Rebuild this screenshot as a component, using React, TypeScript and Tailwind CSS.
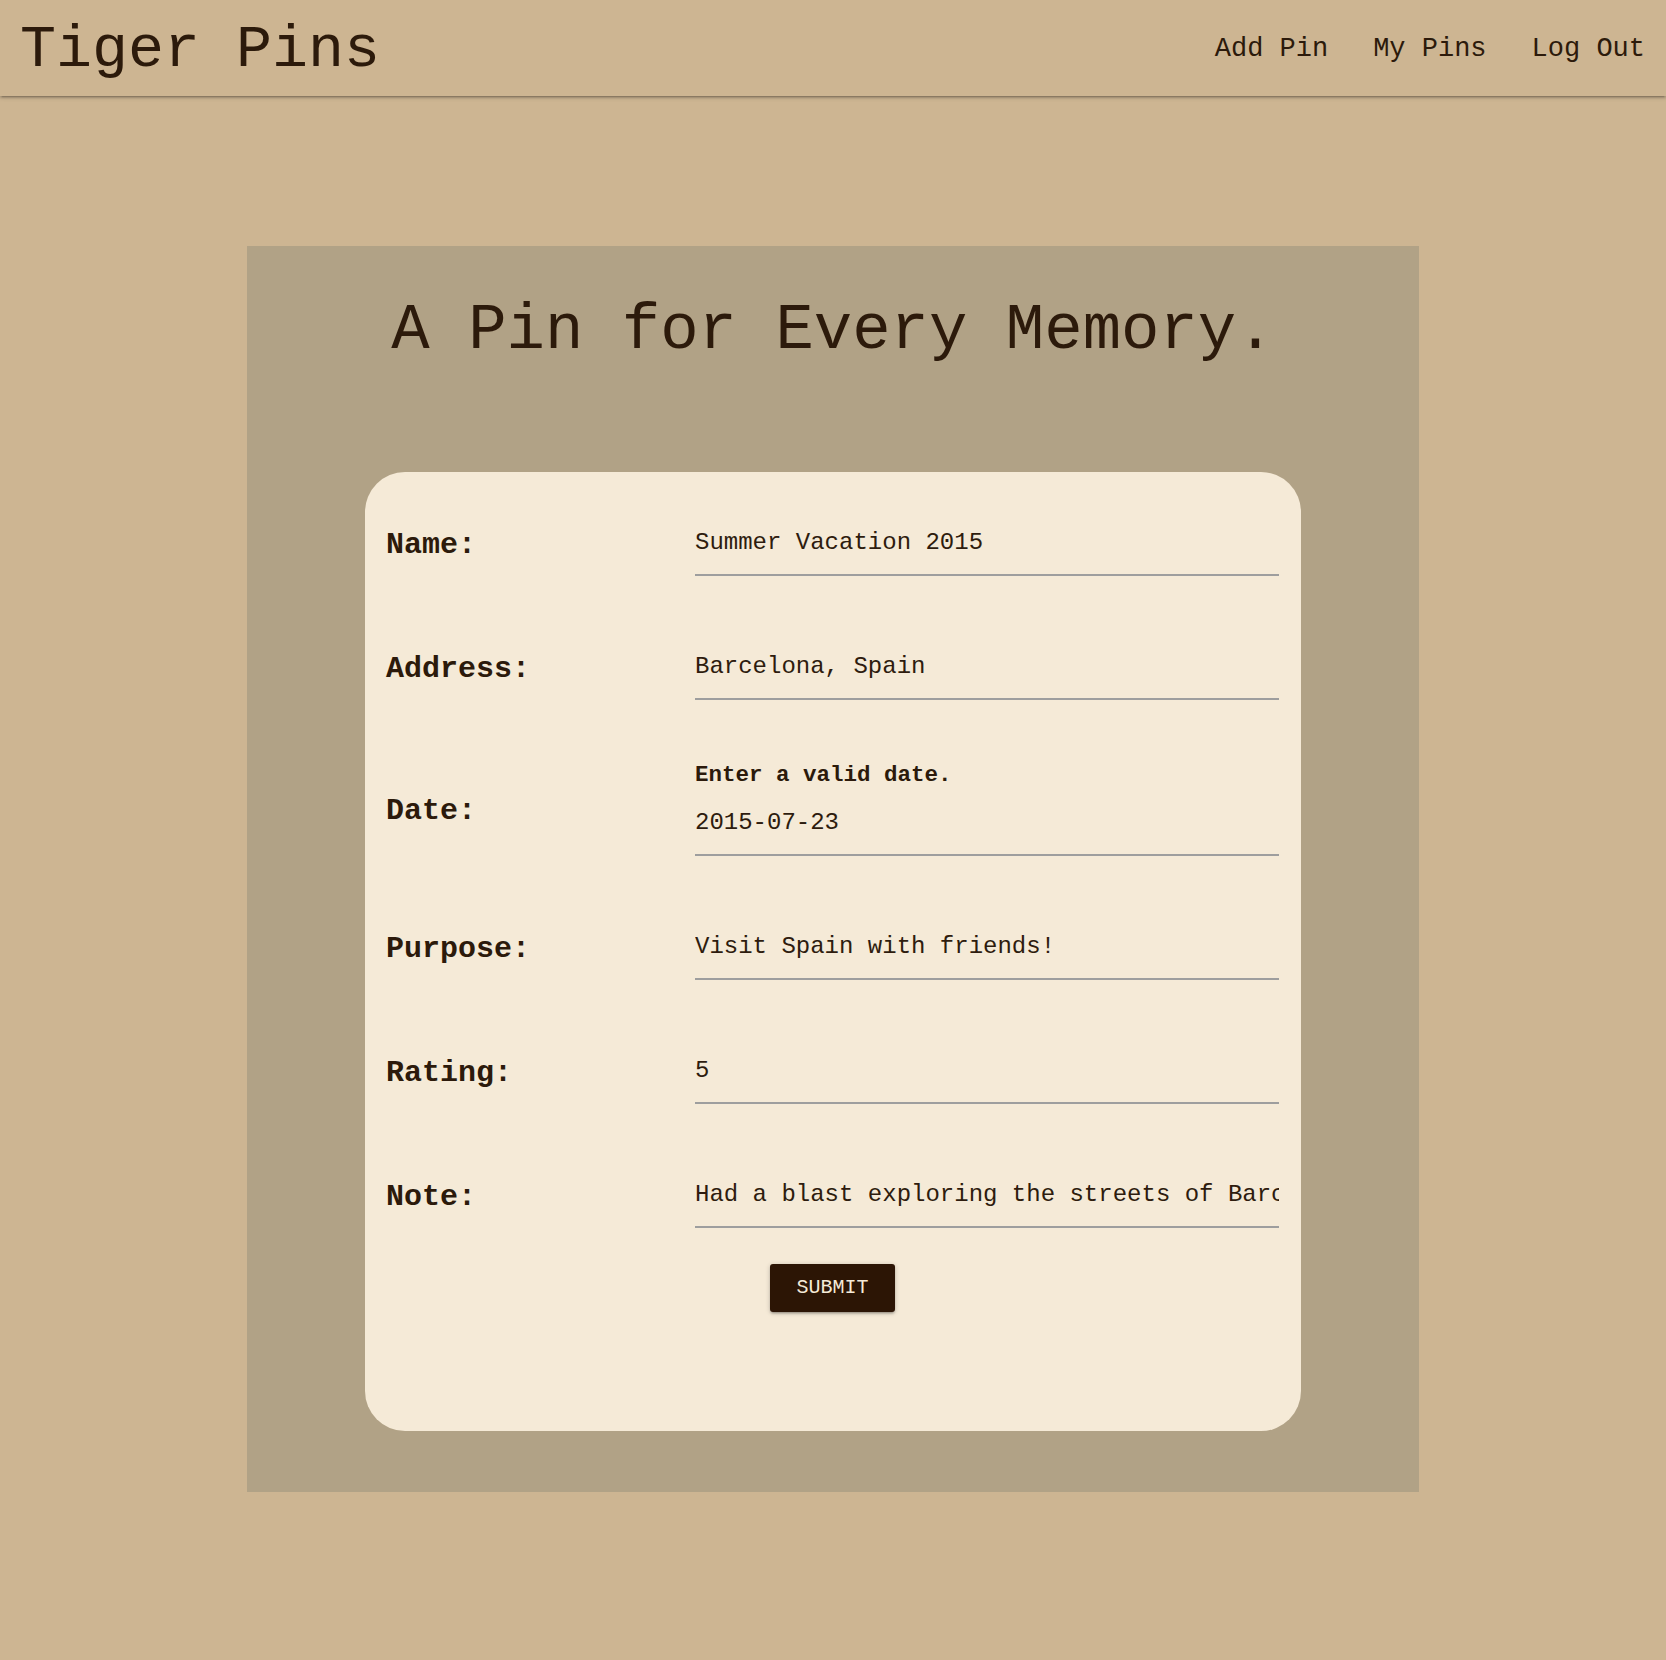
import React from "react";

const rows: { label: string; value: string; error?: string }[] = [
  { label: "Name:", value: "Summer Vacation 2015" },
  { label: "Address:", value: "Barcelona, Spain" },
  { label: "Date:", value: "2015-07-23", error: "Enter a valid date." },
  { label: "Purpose:", value: "Visit Spain with friends!" },
  { label: "Rating:", value: "5" },
  {
    label: "Note:",
    value: "Had a blast exploring the streets of Barcelona with my best friends!",
  },
];

function Field({ label, value, error, last }: { label: string; value: string; error?: string; last?: boolean }) {
  return (
    <div className={`flex items-center ${last ? "mb-[36px]" : "mb-[58px]"}`}>
      <label className={`w-[309px] shrink-0 text-[30px] leading-[34px] font-bold ${error ? "pt-[8px]" : "pt-[4px]"}`}>
        {label}
      </label>
      <div className="flex-1 min-w-0">
        {error && (
          <div className="pt-[2px] text-[22.5px] leading-[30px] font-bold">{error}</div>
        )}
        <input
          readOnly
          defaultValue={value}
          className="block w-full h-[66px] bg-transparent border-0 border-b-2 border-solid border-[#9e9e9e] outline-none text-[24px] text-[#2e1c0e] p-0"
        />
      </div>
    </div>
  );
}

export default function App() {
  return (
    <div className="min-h-[1660px] bg-[#cdb592] font-['Liberation_Mono','Courier_New',monospace] text-[#2c1a0b]">
      <header className="relative z-10 h-[96px] flex items-center justify-between pl-[20px] pr-[21px] bg-[#cdb592] shadow-[0_2px_2px_0_rgba(0,0,0,0.14),0_3px_1px_-2px_rgba(0,0,0,0.12),0_1px_5px_0_rgba(0,0,0,0.2)]">
        <div className="text-[60px] leading-[68px] mt-[4px]">Tiger Pins</div>
        <nav className="flex gap-[45px] text-[27px] leading-[31px] mt-[2px]">
          <a>Add Pin</a>
          <a>My Pins</a>
          <a>Log Out</a>
        </nav>
      </header>
      <main className="pt-[150px] pb-[168px]">
        <section className="mx-auto w-[1172px] bg-[#b1a286] pt-[49px] pb-[61px]">
          <h2 className="text-center text-[64px] leading-[72px]">A Pin for Every Memory.</h2>
          <form className="mx-auto mt-[105px] w-[936px] rounded-[40px] bg-[#f5ead7] pt-[38px] pb-[119px] pl-[21px] pr-[22px]">
            {rows.map((r, i) => (
              <Field key={r.label} {...r} last={i === rows.length - 1} />
            ))}
            <div className="flex justify-center">
              <button
                type="button"
                className="h-[48px] px-[26px] rounded-[3px] bg-[#2c1505] text-[#f5ead7] text-[20px] uppercase shadow-[0_2px_2px_0_rgba(0,0,0,0.14),0_3px_1px_-2px_rgba(0,0,0,0.12),0_1px_5px_0_rgba(0,0,0,0.2)]"
              >
                Submit
              </button>
            </div>
          </form>
        </section>
      </main>
    </div>
  );
}
